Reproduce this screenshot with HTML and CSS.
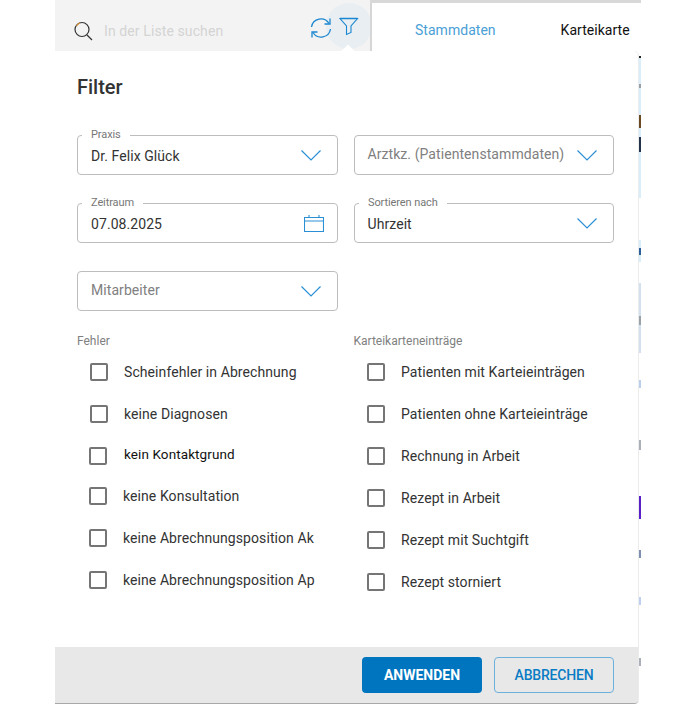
FILE: index.html
```html
<!DOCTYPE html>
<html lang="de">
<head>
<meta charset="utf-8">
<title>Filter</title>
<link rel="stylesheet" href="styles.css">
</head>
<body>
<div class="app">
  <header class="topbar">
    <div class="listbar">
      <svg class="ic-search" width="22" height="22" viewBox="0 0 22 22" fill="none"><circle cx="9" cy="9.5" r="7" stroke="#333" stroke-width="1.2"/><path d="M3.6 6A7 7 0 0 1 7 3" stroke="#e39a3a" stroke-width="1.2"/><path d="M14 15l5 5" stroke="#333" stroke-width="1.3"/></svg>
      <span class="search-ph">In der Liste suchen</span>
      <svg class="ic-sync" width="22" height="22" viewBox="0 0 22 22" fill="none" stroke="#1b87d0" stroke-width="1.3"><path d="M1.500 10A9.500 9.500 0 0 1 19 6.500"/><path d="M20 1.500V7h-5.500"/><path d="M20.500 12A9.500 9.500 0 0 1 3 15.500"/><path d="M2 20.500V15h5.500"/></svg>
      <span class="filter-btn">
        <svg width="20" height="20" viewBox="0 0 20 20" fill="none" stroke="#1b87d0" stroke-width="1.1"><path d="M1 2.500h17.500l-6.500 7.500v6.500l-4.500 2V10z"/><path d="M1 2.500h17.500" stroke-width="1.500"/></svg>
      </span>
    </div>
    <nav class="tabs">
      <span class="tab tab-active">Stammdaten</span>
      <span class="tab">Karteikarte</span>
    </nav>
  </header>

  <div class="stage">
    <section class="panel">
      <h1 class="title">Filter</h1>
      <div class="fields">
        <div class="field filled"><span class="legend">Praxis</span><span class="value">Dr. Felix Glück</span>
          <svg class="chev" width="20" height="11" viewBox="0 0 20 11" fill="none"><path d="M.5.5l9.500 9.500L19.500.5"/></svg></div>
        <div class="field"><span class="value muted narrow">Arztkz. (Patientenstammdaten)</span>
          <svg class="chev" width="20" height="11" viewBox="0 0 20 11" fill="none"><path d="M.5.5l9.500 9.500L19.500.5"/></svg></div>
        <div class="field filled"><span class="legend">Zeitraum</span><span class="value">07.08.2025</span>
          <svg class="cal" width="20" height="18" viewBox="0 0 20 18" fill="none"><path d="M.5 3.500h19v14H.5zM.5 7h19M5 1v2.500M15 1v2.500"/></svg></div>
        <div class="field filled"><span class="legend">Sortieren nach</span><span class="value narrow">Uhrzeit</span>
          <svg class="chev" width="20" height="11" viewBox="0 0 20 11" fill="none"><path d="M.5.5l9.500 9.500L19.500.5"/></svg></div>
        <div class="field"><span class="value muted">Mitarbeiter</span>
          <svg class="chev" width="20" height="11" viewBox="0 0 20 11" fill="none"><path d="M.5.5l9.500 9.500L19.500.5"/></svg></div>
      </div>
      <div class="groups">
        <div class="group">
          <div class="group-title">Fehler</div>
          <label class="check"><span class="box"></span><span>Scheinfehler in Abrechnung</span></label>
          <label class="check"><span class="box"></span><span>keine Diagnosen</span></label>
          <label class="check shift"><span class="box"></span><span class="dark">kein Kontaktgrund</span></label>
          <label class="check shift up"><span class="box"></span><span>keine Konsultation</span></label>
          <label class="check shift"><span class="box"></span><span>keine Abrechnungsposition Ak</span></label>
          <label class="check shift"><span class="box"></span><span>keine Abrechnungsposition Ap</span></label>
        </div>
        <div class="group">
          <div class="group-title">Karteikarteneinträge</div>
          <label class="check"><span class="box"></span><span>Patienten mit Karteieinträgen</span></label>
          <label class="check"><span class="box"></span><span>Patienten ohne Karteieinträge</span></label>
          <label class="check"><span class="box"></span><span>Rechnung in Arbeit</span></label>
          <label class="check"><span class="box"></span><span>Rezept in Arbeit</span></label>
          <label class="check"><span class="box"></span><span>Rezept mit Suchtgift</span></label>
          <label class="check"><span class="box"></span><span>Rezept storniert</span></label>
        </div>
      </div>
      <footer class="actions">
        <button class="btn btn-primary">ANWENDEN</button>
        <button class="btn btn-ghost">ABBRECHEN</button>
      </footer>
    </section>
    <div class="behind"></div>
  </div>
</div>
</body>
</html>
```
FILE: styles.css
```css
* { box-sizing: border-box; }
html, body { margin: 0; height: 100%; background: #fff; overflow: hidden; }
body { font-family: Roboto, "Liberation Sans", sans-serif; color: #333; }

.app { height: 704px; margin-left: 55px; width: 586px; display: flex; flex-direction: column; }

.topbar { height: 51px; flex: none; display: flex; background: #f3f3f3; }
.listbar { width: 315px; flex: none; display: flex; align-items: center; padding-left: 18px; padding-top: 10px; }
.ic-search { flex: none; }
.search-ph { margin-left: 9px; font-size: 14px; letter-spacing: .1px; color: #d4d4d4; flex: 1; }
.ic-sync { flex: none; margin-top: -6px; margin-right: -5.5px; position: relative; z-index: 1; }
.filter-btn { flex: none; width: 46px; height: 46px; border-radius: 50%; background: #e8eef2; display: flex; align-items: center; justify-content: center; margin-top: -9px; margin-right: -2px; position: relative; }
.filter-btn::after { content: ""; position: absolute; left: 16px; bottom: -10px; width: 12px; height: 12px; background: #fff; transform: rotate(45deg); }
.filter-btn svg { position: relative; z-index: 1; }

.tabs { flex: 1; margin-top: 3px; background: #fff; border-left: 2px solid #d6d6d6; box-shadow: 0 -3px 0 #d8d8d8; display: flex; align-items: center; padding-left: 43px; gap: 65px; font-size: 14px; letter-spacing: .03px; position: relative; }
.tab { color: #111; margin-top: 6px; }
.tab-active { color: #4a9fd6; }

.stage { flex: 1; min-height: 0; display: flex; }
.panel { position: relative; z-index: 1; width: 583px; flex: none; display: flex; flex-direction: column; background: #fff; border-bottom: 1px solid #a8a8a8; border-radius: 0 5px 4px 0; box-shadow: 1px 0 0 #ececec; }
.behind { flex: 1; background: linear-gradient(to bottom,
  #fff 0 5px, #222 5px 7px, #d9eefa 7px 33px, #9aa0a8 33px 37px, #d9eefa 37px 64px,
  #6a4a22 64px 77px, #d9eefa 77px 86px, #22334a 86px 101px, #d9eefa 101px 147px,
  #fff 147px 189px, #d9eefa 189px 197px, #2a5f9a 197px 204px, #d9eefa 204px 211px,
  #fff 211px 232px, #d3e0ee 232px 265px, #9aa0a8 265px 274px, #d3e0ee 274px 302px,
  #fff 302px 329px, #bcd0ee 329px 337px, #fff 337px 389px, #aab0b8 389px 399px,
  #fff 399px 445px, #5a20c8 445px 468px, #fff 468px 499px, #7f8fb0 499px 507px,
  #fff 507px 546px, #c0d0f0 546px 554px, #fff 554px 607px, #aab0b8 607px 615px, #fff 615px); }

.title { margin: 24px 0 0 22px; font-size: 20px; line-height: 24px; font-weight: 500; color: #333; }

.fields { margin: 36px 0 0 22px; width: 537px; display: grid; grid-template-columns: 261px 260px; column-gap: 16px; row-gap: 28px; }
.field { position: relative; height: 40px; border: 1px solid #bdbdbd; border-radius: 4px; display: flex; align-items: center; justify-content: space-between; padding: 0 16px 0 13px; }
.field.filled { padding-top: 2px; }
.field.filled svg { margin-top: -2px; }
.legend { position: absolute; left: 4px; top: -8px; padding: 0 9px; background: #fff; font-size: 11px; letter-spacing: -.1px; line-height: 13px; color: #777; }
.value { font-size: 14px; letter-spacing: .07px; color: #333; }
.narrow { margin-left: -.5px; }
.muted { color: #808080; margin-top: -2px; }
.chev path { stroke: #2b8fd6; stroke-width: 1.2; }
.cal path { stroke: #2b8fd6; stroke-width: 1.1; }
.cal { margin-right: -2.5px; }

.groups { margin: 23px 0 0 22px; display: grid; grid-template-columns: 277px 260px; }
.group-title { font-size: 12px; line-height: 14px; color: #808080; }
.group + .group .group-title { margin-left: -.5px; }
.check { height: 42px; display: flex; align-items: center; font-size: 14px; letter-spacing: .08px; color: #333; padding-left: 13px; }
.group-title + .check { margin-top: 3px; }
.check .box { width: 18px; height: 18px; border: 2px solid #757575; border-radius: 2px; margin-right: 16px; flex: none; }
.check.shift { padding-left: 12px; }
.check.up { margin-top: -2px; }
.dark { color: #111; font-size: 13.5px; letter-spacing: .1px; margin-left: 1px; margin-bottom: 4px; }

.actions { margin-top: auto; height: 56px; background: #e8e8e8; display: flex; align-items: flex-start; padding: 10px 0 0 307px; gap: 12px; border-bottom-right-radius: 4px; }
.btn { height: 36px; width: 120px; border-radius: 4px; font: 700 14px Roboto, sans-serif; cursor: pointer; }
.btn-primary { background: #0075bf; border: 0; color: #fff; }
.btn-ghost { background: transparent; border: 1px solid #6cb0dc; color: #0a7cc4; font-weight: 500; letter-spacing: -.2px; }
```
